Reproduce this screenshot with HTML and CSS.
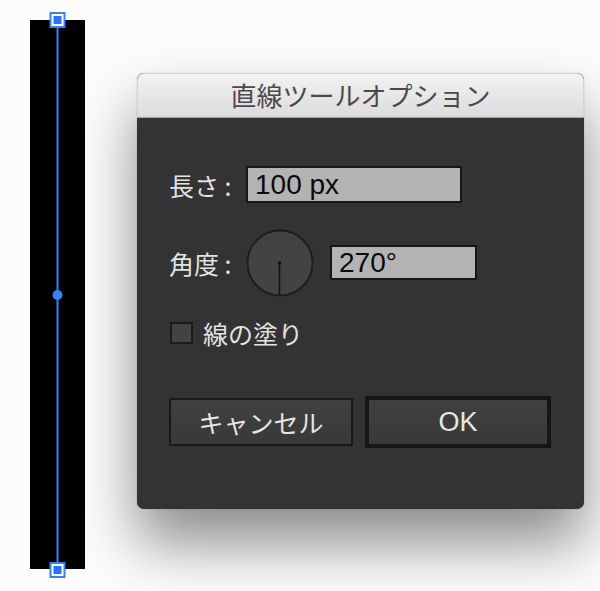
FILE: index.html
```html
<!DOCTYPE html>
<html lang="ja">
<head>
<meta charset="utf-8">
<link rel="stylesheet" href="styles.css">
</head>
<body>
<div class="canvas">
  <svg class="path-art" width="70" height="591" viewBox="0 0 70 591">
    <rect x="10" y="20" width="55" height="549" fill="#000"/>
    <line x1="37.5" y1="20" x2="37.5" y2="570" stroke="#3b7ff5" stroke-width="2"/>
    <circle cx="37.5" cy="295" r="5" fill="#3b7ff5"/>
    <rect x="30.5" y="13" width="14" height="14" fill="#fff" stroke="#3b7ff5" stroke-width="2"/>
    <rect x="33.5" y="16" width="8" height="8" fill="#2a75f3"/>
    <rect x="30.5" y="563" width="14" height="14" fill="#fff" stroke="#3b7ff5" stroke-width="2"/>
    <rect x="33.5" y="566" width="8" height="8" fill="#2a75f3"/>
  </svg>

  <div class="dialog">
    <div class="titlebar">直線ツールオプション</div>
    <div class="dialog-body">
      <div class="row row-length">
        <span class="label">長さ :</span>
        <div class="field field-wide">100 px</div>
      </div>
      <div class="row row-angle">
        <span class="label">角度 :</span>
        <svg class="dial" width="68" height="68" viewBox="0 0 68 68">
          <circle cx="34" cy="34" r="32.5" fill="#434343" stroke="#1e1e1e" stroke-width="2"/>
          <line x1="33.5" y1="34" x2="33.5" y2="66" stroke="#111" stroke-width="1.5"/>
          <circle cx="33.5" cy="34" r="1.8" fill="#111"/>
        </svg>
        <div class="field field-narrow">270°</div>
      </div>
      <div class="row row-check">
        <span class="checkbox"></span>
        <span class="check-label">線の塗り</span>
      </div>
      <div class="buttons">
        <div class="btn btn-cancel">キャンセル</div>
        <div class="btn btn-ok">OK</div>
      </div>
    </div>
  </div>
</div>
</body>
</html>
```

FILE: styles.css
```css
* { box-sizing: border-box; }
html, body {
  margin: 0;
  padding: 0;
  background: #ffffff;
  width: 600px;
  height: 591px;
  overflow: hidden;
  font-family: "Liberation Sans", "Noto Sans CJK JP", sans-serif;
}
.canvas {
  position: relative;
  width: 600px;
  height: 591px;
  background: #fcfcfc;
}
.path-art {
  position: absolute;
  left: 20px;
  top: 0;
}
.dialog {
  position: absolute;
  left: 137px;
  top: 73px;
  width: 447px;
  height: 436px;
  border-radius: 7px;
  overflow: hidden;
  background: #333333;
  box-shadow: 0 34px 60px rgba(0, 0, 0, 0.45), 0 0 1px rgba(0, 0, 0, 0.4);
}
.titlebar {
  height: 45px;
  background: linear-gradient(#f3f3f3, #dcdcdc);
  border-bottom: 1px solid #a8a8a8;
  border-radius: 7px 7px 0 0;
  box-shadow: inset 0 0 0 1px #d4d4d4;
  color: #4a4a4a;
  font-family: "Noto Sans CJK JP", sans-serif;
  font-size: 26px;
  line-height: 44px;
  text-align: center;
}
.dialog-body {
  padding: 48px 33px 0 32px;
  display: flex;
  flex-direction: column;
}
.row {
  display: flex;
  align-items: center;
}
.label {
  width: 77px;
  color: #e2e2e2;
  font-family: "Noto Sans CJK JP", sans-serif;
  font-size: 25px;
  white-space: pre;
}
.row-length { height: 37px; }
.row-angle { height: 67px; margin-top: 26px; }
.row-check { height: 22px; margin-top: 26px; }
.field {
  background: #b3b3b3;
  border: 2px solid #161616;
  color: #0a0a0a;
  font-size: 28px;
  padding-left: 7px;
  display: flex;
  align-items: center;
}
.field-wide { width: 216px; height: 37px; }
.field-narrow { width: 147px; height: 35px; margin-left: 16px; }
.dial { display: block; }
.checkbox {
  width: 23px;
  height: 22px;
  margin-left: 1px;
  background: #434343;
  border: 2px solid #1c1c1c;
}
.check-label {
  margin-left: 10px;
  color: #e2e2e2;
  font-family: "Noto Sans CJK JP", sans-serif;
  font-size: 25px;
}
.buttons {
  display: flex;
  align-items: center;
  margin-top: 52px;
  gap: 12px;
}
.btn {
  display: flex;
  align-items: center;
  justify-content: center;
  color: #e6e6e6;
  background: linear-gradient(#404040, #393939);
  border: 2px solid #1a1a1a;
}
.btn-cancel {
  width: 184px;
  height: 48px;
  font-family: "Noto Sans CJK JP", sans-serif;
  font-size: 25px;
}
.btn-ok {
  width: 186px;
  height: 52px;
  border: 4px solid #161616;
  font-size: 27px;
}
```
